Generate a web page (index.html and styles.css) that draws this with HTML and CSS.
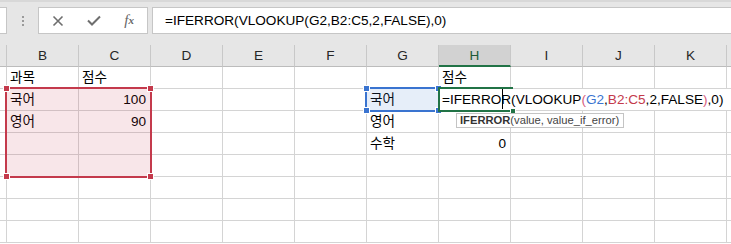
FILE: index.html
```html
<!DOCTYPE html>
<html lang="ko">

<head>
    <meta charset="UTF-8">
    <title>IFERROR VLOOKUP</title>
    <link rel="stylesheet" href="styles.css">
</head>

<body>
    <div class="toolbar">
        <div class="namebox"></div>
        <div class="grip"><i></i><i></i><i></i></div>
        <div class="fbuttons">
            <span class="fbtn">
                <svg width="12" height="12" viewBox="0 0 12 12"><path d="M1.5 1.5 L10.5 10.5 M10.5 1.5 L1.5 10.5" stroke="#6e6e6e" stroke-width="1.6" fill="none"/></svg>
            </span>
            <span class="fbtn">
                <svg width="14" height="11" viewBox="0 0 14 11"><path d="M1 5.5 L5 9.5 L13 1.5" stroke="#6e6e6e" stroke-width="2" fill="none"/></svg>
            </span>
            <span class="fbtn fx">f<small>x</small></span>
        </div>
        <div class="fbox">=IFERROR(VLOOKUP(G2,B2:C5,2,FALSE),0)</div>
    </div>

    <div class="sheet">
        <div class="grid">
            <!-- column headers -->
            <div class="hd"></div><div class="hd">B</div><div class="hd">C</div><div class="hd">D</div><div class="hd">E</div><div class="hd">F</div><div class="hd">G</div><div class="hd on">H</div><div class="hd">I</div><div class="hd">J</div><div class="hd">K</div><div class="hd"></div>
            <!-- row 1 -->
            <div class="c"></div><div class="c">과목</div><div class="c">점수</div><div class="c"></div><div class="c"></div><div class="c"></div><div class="c"></div><div class="c">점수</div><div class="c"></div><div class="c"></div><div class="c"></div><div class="c"></div>
            <!-- row 2 -->
            <div class="c"></div><div class="c">국어</div><div class="c r">100</div><div class="c"></div><div class="c"></div><div class="c"></div><div class="c">국어</div><div class="c"></div><div class="c"></div><div class="c"></div><div class="c"></div><div class="c"></div>
            <!-- row 3 -->
            <div class="c"></div><div class="c">영어</div><div class="c r">90</div><div class="c"></div><div class="c"></div><div class="c"></div><div class="c">영어</div><div class="c"></div><div class="c"></div><div class="c"></div><div class="c"></div><div class="c"></div>
            <!-- row 4 -->
            <div class="c"></div><div class="c"></div><div class="c"></div><div class="c"></div><div class="c"></div><div class="c"></div><div class="c">수학</div><div class="c r">0</div><div class="c"></div><div class="c"></div><div class="c"></div><div class="c"></div>
            <!-- rows 5-8 -->
            <div class="c"></div><div class="c"></div><div class="c"></div><div class="c"></div><div class="c"></div><div class="c"></div><div class="c"></div><div class="c"></div><div class="c"></div><div class="c"></div><div class="c"></div><div class="c"></div>
            <div class="c"></div><div class="c"></div><div class="c"></div><div class="c"></div><div class="c"></div><div class="c"></div><div class="c"></div><div class="c"></div><div class="c"></div><div class="c"></div><div class="c"></div><div class="c"></div>
            <div class="c"></div><div class="c"></div><div class="c"></div><div class="c"></div><div class="c"></div><div class="c"></div><div class="c"></div><div class="c"></div><div class="c"></div><div class="c"></div><div class="c"></div><div class="c"></div>
            <div class="c"></div><div class="c"></div><div class="c"></div><div class="c"></div><div class="c"></div><div class="c"></div><div class="c"></div><div class="c"></div><div class="c"></div><div class="c"></div><div class="c"></div><div class="c"></div>
        </div>

        <!-- reference highlights -->
        <div class="ref ref-red"><i class="h tl"></i><i class="h tr"></i><i class="h bl"></i><i class="h br"></i></div>
        <div class="ref ref-blue"><i class="h tl"></i><i class="h tr"></i><i class="h bl"></i><i class="h br"></i></div>

        <!-- in-cell editor -->
        <div class="editor">=IFERRO<span class="caret"></span>R(VLOOKUP<span class="pm">(</span><span class="rb">G2</span>,<span class="rr">B2:C5</span>,2,FALSE<span class="pm">)</span>,0)</div>
        <div class="active"><i class="fill"></i></div>

        <div class="tip"><b>IFERROR</b>(value, value_if_error)</div>
    </div>
</body>

</html>
```

FILE: styles.css
```css
* {
    box-sizing: border-box;
    margin: 0;
    padding: 0;
}

body {
    width: 731px;
    height: 244px;
    overflow: hidden;
    background: #fff;
    color: #000;
    font-family: "Liberation Sans", "Noto Sans CJK KR", sans-serif;
    font-size: 13.6px;
}

/* formula bar */
.toolbar {
    height: 45px;
    background: #e6e6e6;
    border-top: 2px solid #d8d8d8;
    padding-top: 5px;
    display: flex;
    align-items: flex-start;
}

.namebox {
    width: 7px;
    height: 27px;
    background: #fff;
    border: 1px solid #c6c6c6;
    border-left: none;
}

.grip {
    width: 31px;
    height: 27px;
    display: flex;
    flex-direction: column;
    align-items: center;
    justify-content: center;
    gap: 2px;
}

.grip i {
    width: 2px;
    height: 2px;
    background: #9a9a9a;
}

.fbuttons {
    width: 110px;
    height: 27px;
    background: #fff;
    border: 1px solid #c6c6c6;
    display: flex;
    padding-left: 1px;
}

.fbtn {
    width: 36px;
    display: flex;
    align-items: center;
    justify-content: center;
}

.fx {
    font-family: "Liberation Serif", serif;
    font-style: italic;
    font-size: 15px;
    color: #666;
    padding-bottom: 1px;
}

.fx small {
    font-size: 11px;
    font-weight: bold;
}

.fbox {
    flex: 1;
    height: 27px;
    margin-left: 4px;
    background: #fff;
    border: 1px solid #c6c6c6;
    border-right: none;
    padding-left: 12px;
    line-height: 25px;
    white-space: nowrap;
}

/* worksheet */
.sheet {
    position: relative;
    overflow: hidden;
    height: 199px;
}

.grid {
    display: grid;
    grid-template-columns: 7px repeat(11, 72px);
    grid-auto-rows: 22px;
}

.hd {
    background: #e6e6e6;
    border-right: 1px solid #c8c8c8;
    border-bottom: 1px solid #bcbcbc;
    text-align: center;
    line-height: 21px;
    color: #262626;
}

.hd.on {
    background: #d2d2d2;
    color: #1e5a38;
    border-bottom: 2px solid #217346;
}

.c {
    border-right: 1px solid #d4d4d4;
    border-bottom: 1px solid #d4d4d4;
    padding: 0 3px;
    line-height: 21px;
    white-space: nowrap;
}

.c.r {
    text-align: right;
    padding-right: 4px;
}

/* coloured reference boxes */
.ref {
    position: absolute;
    border: 2px solid;
}

.ref-red {
    left: 5px;
    top: 42px;
    width: 147px;
    height: 91px;
    border-color: #c43a4c;
    background: rgba(200, 50, 70, 0.12);
}

.ref-blue {
    left: 365px;
    top: 42px;
    width: 75px;
    height: 25px;
    border-color: #3a74d0;
    background: rgba(60, 120, 210, 0.13);
}

.h {
    position: absolute;
    width: 7px;
    height: 7px;
    border: 1px solid #fff;
}

.ref-red .h { background: #c43a4c; }
.ref-blue .h { background: #3a74d0; }

.tl { left: -4px; top: -4px; }
.tr { right: -4px; top: -4px; }
.bl { left: -4px; bottom: -4px; }
.br { right: -4px; bottom: -4px; }

/* editing cell H2 */
.editor {
    position: absolute;
    left: 439px;
    top: 44px;
    width: 288px;
    height: 21px;
    background: #fff;
    padding-left: 3px;
    line-height: 21px;
    white-space: nowrap;
}

.caret {
    display: inline-block;
    width: 1px;
    height: 20px;
    background: #000;
    vertical-align: -5px;
    margin-left: 1px;
    margin-right: -2px;
}

.rb { color: #3a74d0; }
.rr { color: #c43a4c; }
.pm { color: #d65c7e; }

.active {
    position: absolute;
    left: 438px;
    top: 42px;
    width: 75px;
    height: 25px;
    border: 2px solid #217346;
    border-right: none;
}

.fill {
    position: absolute;
    right: -3px;
    bottom: -4px;
    width: 6px;
    height: 6px;
    background: #217346;
    border: 1px solid #fff;
}

/* function tooltip */
.tip {
    position: absolute;
    left: 456px;
    top: 68px;
    height: 15px;
    padding: 0 4px 0 3px;
    background: #fff;
    border: 1px solid #c4c4c4;
    font-size: 11.2px;
    line-height: 13px;
    color: #444;
    white-space: nowrap;
}

.tip b {
    color: #333;
}
```
